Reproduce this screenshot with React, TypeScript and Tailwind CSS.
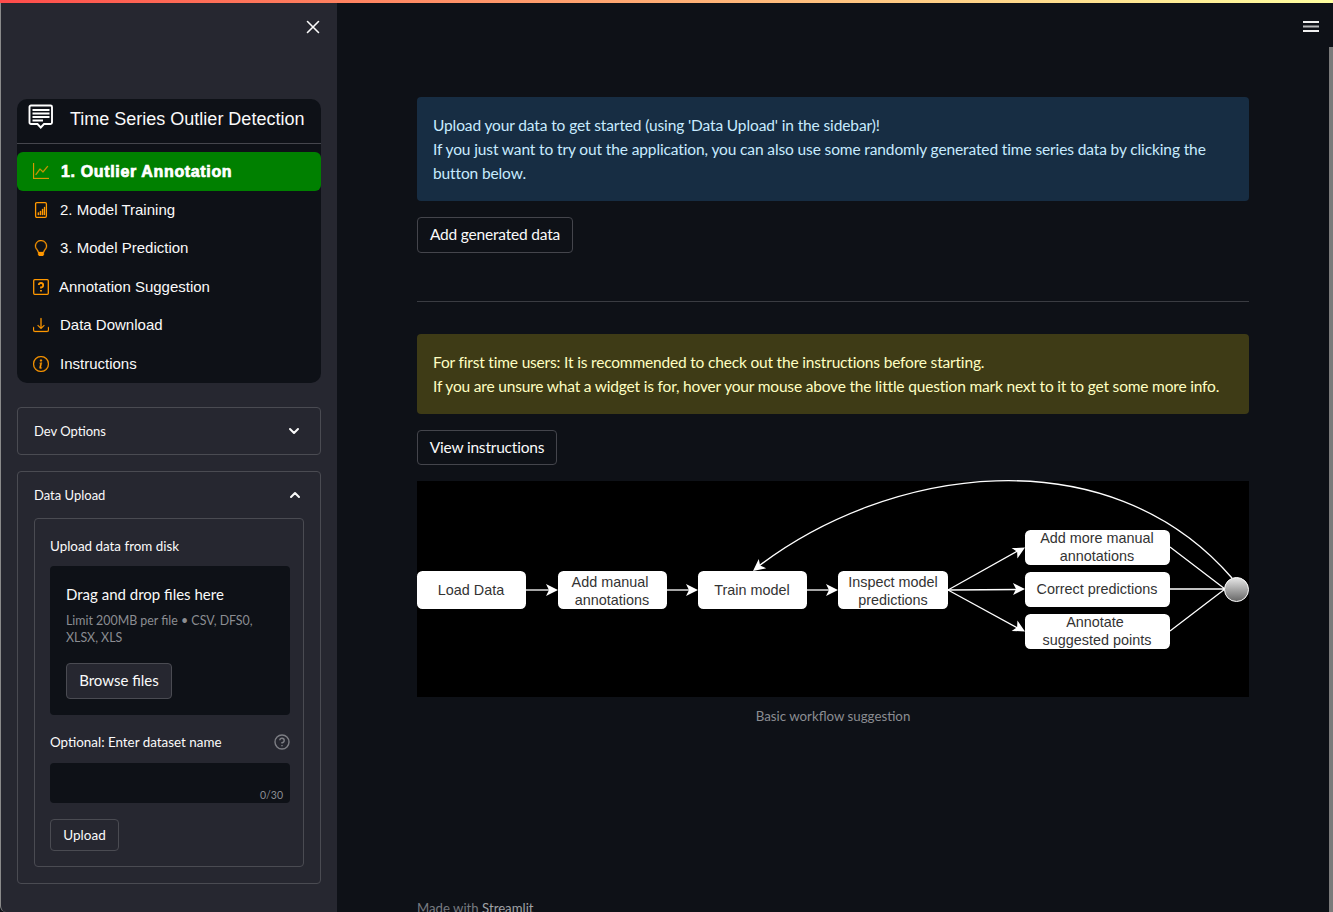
import React from "react";
import { BsGraphUp, BsLightbulb, BsDownload, BsInfoCircle } from "react-icons/bs";

function BarFile({ className }: { className?: string }) {
  return (
    <svg viewBox="0 0 16 16" className={className} fill="none" stroke="currentColor">
      <rect x="2.6" y="0.7" width="10.8" height="14.6" rx="1.2" strokeWidth="1.3" />
      <path d="M4.8 10.6h1.2v2.4H4.8zM6.9 9h1.2v4H6.9zM9 7h1.2v6H9zM11 5h1v8h-1z" fill="currentColor" strokeWidth="0.3" />
    </svg>
  );
}

function QuestionBox({ className }: { className?: string }) {
  return (
    <svg viewBox="0 0 16 16" className={className} fill="none" stroke="currentColor">
      <rect x="0.7" y="0.7" width="14.6" height="14.6" rx="1" strokeWidth="1.3" />
      <path d="M5.8 6A2.2 2.2 0 1 1 8 8.4V9.6M8 11v1.6" strokeWidth="1.8" />
    </svg>
  );
}

const nav = [
  { label: "1. Outlier Annotation", Icon: BsGraphUp, active: true, gap: "gap-[12px]" },
  { label: "2. Model Training", Icon: BarFile, active: false, gap: "gap-[11px]" },
  { label: "3. Model Prediction", Icon: BsLightbulb, active: false, gap: "gap-[11px]" },
  { label: "Annotation Suggestion", Icon: QuestionBox, active: false, gap: "gap-[10px]" },
  { label: "Data Download", Icon: BsDownload, active: false, gap: "gap-[11px]" },
  { label: "Instructions", Icon: BsInfoCircle, active: false, gap: "gap-[11px]" },
];

function Chevron({ up }: { up?: boolean }) {
  return (
    <svg width="16" height="16" viewBox="0 0 16 16" fill="none" stroke="#fafafa" strokeWidth="2" strokeLinecap="round" strokeLinejoin="round">
      <path d={up ? "M4 10l4-4 4 4" : "M4 6l4 4 4-4"} />
    </svg>
  );
}

function Box({ x, y, w, h, lines }: { x: number; y: number; w: number; h: number; lines: [string, number, number][] }) {
  return (
    <g>
      <rect x={x} y={y} width={w} height={h} rx="5.5" fill="#fff" />
      {lines.map(([t, cx, by]) => (
        <text key={t} x={cx} y={by} textAnchor="middle" fontSize="14.4" fill="#333" fontFamily="'Liberation Sans', Arial, sans-serif">{t}</text>
      ))}
    </g>
  );
}

function Arrow({ d, tip, angle }: { d: string; tip: [number, number]; angle: number }) {
  return (
    <g>
      <path d={d} fill="none" stroke="#fff" strokeWidth="1.3" />
      <path d="M0 0L-12 -6L-9 0L-12 6Z" fill="#fff" transform={`translate(${tip[0]} ${tip[1]}) rotate(${angle})`} />
    </g>
  );
}

function Diagram() {
  return (
    <svg width="832" height="216" viewBox="0 0 832 216" className="block overflow-visible bg-black">
      <defs>
        <linearGradient id="ball" x1="0" y1="0" x2="0" y2="1">
          <stop offset="0" stopColor="#e8e8e8" />
          <stop offset="1" stopColor="#666" />
        </linearGradient>
      </defs>
      <Arrow d="M109 109H137" tip={[141, 109]} angle={0} />
      <Arrow d="M250 109H278" tip={[281, 109]} angle={0} />
      <Arrow d="M390 109H418" tip={[421, 109]} angle={0} />
      <Arrow d="M531 109L604 68" tip={[608, 66.5]} angle={-29} />
      <Arrow d="M531 109L604 108.5" tip={[608, 108]} angle={-0.5} />
      <Arrow d="M531 109L604 149" tip={[608, 150.5]} angle={29} />
      <path d="M753 66L808 108M753 108H808M753 150L808 108" fill="none" stroke="#fff" strokeWidth="1.3" />
      <Arrow d="M815 97C690 -47 470 -15 338 88" tip={[336, 90]} angle={142} />
      <Box x={0} y={90} w={109} h={38} lines={[["Load Data", 54, 114]]} />
      <Box x={141} y={90} w={109} h={38} lines={[["Add manual", 193, 106], ["annotations", 195, 124]]} />
      <Box x={281} y={90} w={109} h={38} lines={[["Train model", 335, 114]]} />
      <Box x={421} y={90} w={110} h={38} lines={[["Inspect model", 476, 106], ["predictions", 476, 124]]} />
      <Box x={608} y={49} w={145} h={35} lines={[["Add more manual", 680, 62], ["annotations", 680, 80]]} />
      <Box x={608} y={91} w={145} h={35} lines={[["Correct predictions", 680, 113]]} />
      <Box x={608} y={133} w={145} h={35} lines={[["Annotate", 678, 146], ["suggested points", 680, 164]]} />
      <circle cx="819.5" cy="108.5" r="12" fill="url(#ball)" stroke="#fff" strokeWidth="1" />
    </svg>
  );
}

const ui = "font-['Lato','Noto_Sans',sans-serif]";
const arial = "font-['Liberation_Sans',Arial,sans-serif]";

export default function App() {
  return (
    <div className={`w-[1333px] h-[912px] overflow-hidden bg-[#0e1117] ${ui}`}>
      <div className="h-[3px] bg-gradient-to-r from-[#ff4b4b] to-[#ffffa0]" />
      <div className="flex h-[909px]">
        <aside className="w-[337px] shrink-0 bg-[#262730] border-l border-[#8a8a8a] pl-[16px] pr-[16px] overflow-hidden rounded-bl-[6px]">
          <div className="flex justify-end h-[96px] pt-[17px]">
            <svg width="14" height="14" viewBox="0 0 14 14" className="mr-[1px]" stroke="#fafafa" strokeWidth="1.6" strokeLinecap="round">
              <path d="M1.5 1.5l11 11M12.5 1.5l-11 11" />
            </svg>
          </div>

          <div className={`bg-[#0e1117] rounded-[10px] text-[#fafafa] ${arial}`}>
            <div className="flex items-start h-[45px] border-b border-[#45464d]">
              <svg width="26" height="26" viewBox="0 0 26 26" className="ml-[11px] mt-[5px] shrink-0" fill="none" stroke="#fff">
                <path d="M3 1.5H22.5A1.5 1.5 0 0 1 24 3V18.5A1.5 1.5 0 0 1 22.5 20H16L12.75 23.5L9.5 20H3A1.5 1.5 0 0 1 1.5 18.5V3A1.5 1.5 0 0 1 3 1.5Z" strokeWidth="1.9" />
                <path d="M4.5 6H21.5M4.5 9.5H21.5M4.5 13H21.5M4.5 16.5H15" strokeWidth="1.9" />
              </svg>
              <span className="ml-[16px] mt-[9px] text-[18px] leading-[22px] whitespace-nowrap">Time Series Outlier Detection</span>
            </div>
            <div className="pt-[8px]">
              {nav.map(({ label, Icon, active, gap }) => (
                <div key={label} className={`flex items-center h-[38.5px] pl-[16px] ${gap} ${active ? "bg-[#008000] rounded-[6px] text-white" : ""}`}>
                  <Icon className={`w-[16px] h-[16px] shrink-0 stroke-[0.3px] ${active ? "text-[#d69a00]" : "text-[#ff9800]"}`} />
                  <span className={`whitespace-nowrap ${active ? "text-[16px] leading-[20px] pt-[1px] font-bold tracking-[0.65px] [-webkit-text-stroke:0.7px_white]" : "text-[15px] leading-[20px]"}`}>{label}</span>
                </div>
              ))}
            </div>
          </div>

          <div className="mt-[24px] h-[48px] border border-[#4a4b52] rounded-[4px] flex items-center justify-between pl-[16px] pr-[18px] text-[13px] text-[#fafafa]">
            <span className="pt-[2px]">Dev Options</span>
            <Chevron />
          </div>

          <div className="mt-[16px] border border-[#4a4b52] rounded-[4px] px-[16px] pb-[16px] text-[#fafafa]">
            <div className="h-[46px] flex items-center justify-between pr-[1px] text-[13px]">
              <span className="pt-[2px]">Data Upload</span>
              <Chevron up />
            </div>
            <div className="border border-[#4a4b52] rounded-[4px] pl-[15px] pr-[13px] pb-[15px]">
              <div className="h-[47px] pt-[19px] text-[13.4px] leading-[17px]">Upload data from disk</div>
              <div className="bg-[#0e1117] rounded-[4px] h-[149px] px-[16px] pt-[18px]">
                <div className="text-[15px] leading-[20px]">Drag and drop files here</div>
                <div className="mt-[8px] text-[12.4px] leading-[17px] text-[#8b8d92]">Limit 200MB per file • CSV, DFS0, XLSX, XLS</div>
                <button className="mt-[17px] h-[36px] w-[106px] pb-[2px] bg-[#262730] border border-[#4a4b52] rounded-[4px] text-[15px]">Browse files</button>
              </div>
              <div className="mt-[19px] flex items-center justify-between h-[16px] text-[13.4px]">
                <span>Optional: Enter dataset name</span>
                <svg width="16" height="16" viewBox="0 0 16 16" fill="none" stroke="#7d7e84" strokeWidth="1.4">
                  <circle cx="8" cy="8" r="7" />
                  <path d="M5.8 6.2A2.2 2.2 0 1 1 8 8.6V9.6M8 11v1.2" />
                </svg>
              </div>
              <div className="mt-[13px] h-[40px] bg-[#0e1117] rounded-[4px] flex items-end justify-end pr-[7px] text-[10.5px] leading-[15px] text-[#8b8d92]">0/30</div>
              <button className="mt-[16px] block h-[32px] w-[69px] bg-[#262730] border border-[#4a4b52] rounded-[4px] text-[13.5px]">Upload</button>
            </div>
          </div>
        </aside>

        <main className="relative flex-1 pl-[80px] pr-[84px] pt-[94px] overflow-hidden text-[#fafafa]">
          <svg width="16" height="12" viewBox="0 0 16 12" className="absolute right-[14px] top-[18px]" fill="#f0f0f0">
            <rect y="0" width="16" height="2" />
            <rect y="4.5" width="16" height="2" opacity="0.75" />
            <rect y="9" width="16" height="2" />
          </svg>
          <div className="absolute right-0 top-[44px] bottom-0 w-[4px] bg-[#7a7a7a]" />

          <div className="h-[104px] bg-[#172d43] rounded-[4px] px-[16px] pt-[16px] text-[15.5px] leading-[24px] tracking-[-0.12px] text-[#c7ebff]">
            Upload your data to get started (using 'Data Upload' in the sidebar)!<br />
            If you just want to try out the application, you can also use some randomly generated time series data by clicking the button below.
          </div>
          <button className="mt-[16px] block h-[36px] w-[156px] bg-[#0e1117] border border-[#44454c] rounded-[4px] text-[15.5px] tracking-[-0.2px]">Add generated data</button>
          <div className="mt-[48px] h-px bg-[#3a3c42]" />
          <div className="mt-[32px] h-[80px] bg-[#3e3b16] rounded-[4px] px-[16px] pt-[16px] text-[15.5px] leading-[24px] tracking-[-0.18px] text-[#ffffc2] whitespace-nowrap">
            For first time users: It is recommended to check out the instructions before starting.<br />
            If you are unsure what a widget is for, hover your mouse above the little question mark next to it to get some more info.
          </div>
          <button className="mt-[16px] block h-[35px] w-[140px] bg-[#0e1117] border border-[#44454c] rounded-[4px] text-[15.5px] tracking-[-0.2px]">View instructions</button>
          <div className="mt-[16px]"><Diagram /></div>
          <div className="mt-[11px] text-center text-[13.3px] leading-[17px] text-[#8b8d92]">Basic workflow suggestion</div>
          <div className="mt-[175px] text-[13.2px] leading-[17px] text-[#777a80] whitespace-nowrap">Made with <span className="text-[#a0a2a6]">Streamlit</span></div>
        </main>
      </div>
    </div>
  );
}
